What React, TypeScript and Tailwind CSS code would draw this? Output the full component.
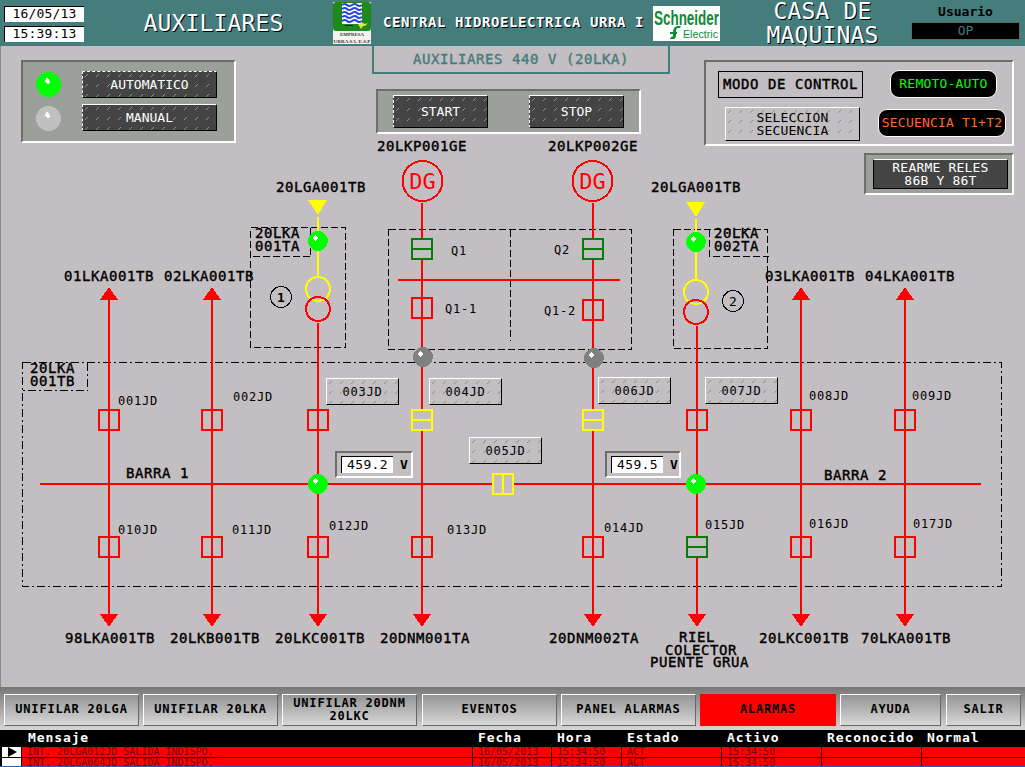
const mono = "[font-family:'DejaVu_Sans_Mono','Liberation_Mono',monospace]";

const RED = "#ff0000";
const YEL = "#ffff00";
const GRN = "#0a7a0a";
const LED = "#00ff00";

function Hatch({ tone }: { tone: "dark" | "light" }) {
  const id = `hatch-${tone}`;
  return (
    <svg className="absolute inset-0 w-full h-full" shapeRendering="crispEdges">
      <defs>
        <pattern id={id} patternUnits="userSpaceOnUse" width="11" height="10">
          <path d="M4 2h1v1h-1zM3 3h1v1h-1zM2 4h1v1h-1z" fill={tone === "dark" ? "#8e8e8e" : "#8c8c8c"} />
        </pattern>
      </defs>
      <rect width="100%" height="100%" fill={`url(#${id})`} />
    </svg>
  );
}

// className must carry the position (relative or absolute)
function HatchButton({ label, tone = "dark", className = "" }: { label: string; tone?: "dark" | "light"; className?: string }) {
  return (
    <div
      className={`flex items-center justify-center border border-t-white border-l-white border-r-black border-b-black text-center ${mono} ${
        tone === "dark" ? "bg-[#444444] text-white" : "bg-[#c3bec2] text-black"
      } ${className}`}
    >
      <Hatch tone={tone} />
      <span className="relative whitespace-pre-line">{label}</span>
    </div>
  );
}

function Panel({ className = "", children }: { className?: string; children?: React.ReactNode }) {
  return (
    <div className={`border-2 border-t-[#6b6e6b] border-l-[#6b6e6b] border-r-white border-b-white ${className}`}>
      {children}
    </div>
  );
}

function Lamp({ color }: { color: string }) {
  return (
    <svg width="25" height="25" viewBox="0 0 25 25" shapeRendering="crispEdges">
      <circle cx="12.5" cy="12.5" r="12.5" fill={color} />
      <path d="M10 6h2v1h1v2h1v2h-1v1h-2v-1h-1v-1h-1v-2h1v-1z" fill="#fff" />
    </svg>
  );
}

function UrraLogo() {
  return (
    <svg width="38" height="42" viewBox="0 0 38 42" className="mt-[2px] shrink-0">
      <rect width="38" height="42" fill="#f4f4ef" />
      <path d="M0 3q0-3 3-3h32q3 0 3 3v23q0 3-3 3h-32q-3 0-3-3z" fill="#1e8a1e" />
      <rect x="9" y="1" width="20" height="21" fill="#fff" />
      <g fill="none" stroke="#2546d8" strokeWidth="2">
        <path d="M9 3q3-2 5 0t5 0t5 0t5 0" />
        <path d="M9 7q3-2 5 0t5 0t5 0t5 0" />
        <path d="M9 11q3-2 5 0t5 0t5 0t5 0" />
        <path d="M9 15q3-2 5 0t5 0t5 0t5 0" />
        <path d="M9 19q3-2 5 0t5 0t5 0t5 0" />
      </g>
      <path d="M28 27l-3-5 2 0 1-2 4 2 3-1-3 3-2 0z" fill="#e2e24a" />
      <rect x="12" y="23" width="8" height="1" fill="#123" />
      <text x="19" y="34" textAnchor="middle" className="[font-family:'Liberation_Serif',serif]" fontSize="5" fontWeight="700" fill="#333" textLength="24" lengthAdjust="spacingAndGlyphs">EMPRESA</text>
      <text x="19" y="41" textAnchor="middle" className="[font-family:'Liberation_Serif',serif]" fontSize="5" fontWeight="700" fill="#333" textLength="37" lengthAdjust="spacingAndGlyphs">URRA SA. E.S.P</text>
    </svg>
  );
}

function SchneiderLogo() {
  return (
    <svg width="67" height="35" viewBox="0 0 67 35" className="shrink-0">
      <rect width="67" height="35" fill="#fff" />
      <text x="33.5" y="19" textAnchor="middle" className="[font-family:'Liberation_Sans',sans-serif]" fontSize="21" fontWeight="700" fill="#0c8a34" textLength="65" lengthAdjust="spacingAndGlyphs">Schneider</text>
      <path d="M20 27q0-7 5-7h3l-1 2h-2q-2 0-2 3v4q0 4-3 4h-3l1-2h1q1 0 1-2zM17 26h7v2h-7z" fill="#0c8a34" />
      <text x="30" y="32" className="[font-family:'Liberation_Sans',sans-serif]" fontSize="11" fill="#0c8a34" textLength="35" lengthAdjust="spacingAndGlyphs">Electric</text>
    </svg>
  );
}

function Breaker({ x, y, kind }: { x: number; y: number; kind: "red" | "yellow" | "green" | "yellowV" }) {
  const c = kind === "red" ? RED : kind === "green" ? GRN : YEL;
  return (
    <g fill="#c3bec2" stroke={c} strokeWidth="2" shapeRendering="crispEdges">
      <rect x={x - 10} y={y - 10} width="20" height="20" />
      {kind === "red" || kind === "yellowV" ? (
        <path d={`M${x} ${y - 10}v20`} />
      ) : (
        <path d={`M${x - 10} ${y}h20`} />
      )}
    </g>
  );
}

function Ball({ x, y, color }: { x: number; y: number; color: string }) {
  return (
    <g shapeRendering="crispEdges">
      <circle cx={x} cy={y} r="10" fill={color} />
      <path d={`M${x - 3} ${y - 6}l3 3l-3 3l-3-3z`} fill="#fff" />
    </g>
  );
}

function Label({ x, y, children, small }: { x: number; y: number; children: string; small?: boolean }) {
  return small ? (
    <text x={x} y={y + 4} fontSize="12" letterSpacing="0.8" fill="#000">{children}</text>
  ) : (
    <text x={x} y={y + 5} fontSize="14" letterSpacing="0.57" stroke="#000" strokeWidth="0.4" fill="#000">{children}</text>
  );
}

function Diagram() {
  return (
    <svg className={`absolute inset-0 ${mono}`} width="1025" height="641" viewBox="0 46 1025 641">
      {/* dashed frames */}
      <g fill="none" stroke="#000" strokeWidth="1" shapeRendering="crispEdges">
        <g strokeDasharray="8 3 2 3">
          <rect x="22.5" y="362.5" width="979" height="224" />
          <path d="M87.5 362.5v28h-65" />
        </g>
        <g strokeDasharray="7 3">
          <rect x="250.5" y="227.5" width="95" height="120" />
          <path d="M310.5 227.5v29h-60" />
          <rect x="388.5" y="229.5" width="243" height="120" />
          <path d="M510.5 229.5v111" />
          <rect x="673.5" y="229.5" width="94" height="119" />
          <path d="M709.5 229.5v27h59" />
        </g>
      </g>

      {/* red lines */}
      <g stroke={RED} strokeWidth="2" fill="none" shapeRendering="crispEdges">
        <path d="M40 484H981" />
        <path d="M398 280H620" />
        {[109, 212, 801, 905].map((x) => (
          <path key={x} d={`M${x} 298V616`} />
        ))}
        <path d="M318 323V616" />
        <path d="M422 203V616" />
        <path d="M593 203V616" />
        <path d="M697 326V616" />
      </g>

      {/* arrow heads */}
      <g fill={RED} shapeRendering="crispEdges">
        {[109, 212, 801, 905].map((x) => (
          <path key={x} d={`M${x} 287l9 13h-18z`} />
        ))}
        {[109, 212, 318, 422, 593, 697, 801, 905].map((x) => (
          <path key={x} d={`M${x} 627l9-13h-18z`} />
        ))}
      </g>

      {/* DG */}
      <g fill="none" stroke={RED} strokeWidth="2" shapeRendering="crispEdges">
        <circle cx="422.5" cy="181" r="20" />
        <circle cx="592.5" cy="181" r="20" />
      </g>
      <text x="422.5" y="189" textAnchor="middle" fontSize="22" fill={RED}>DG</text>
      <text x="592.5" y="189" textAnchor="middle" fontSize="22" fill={RED}>DG</text>

      {/* transformers */}
      <g shapeRendering="crispEdges">
        <path d="M308 200h19l-9 15z" fill={YEL} />
        <path d="M686 202h19l-9 15z" fill={YEL} />
        <path d="M318 217V277M696 219V280" stroke={YEL} strokeWidth="2" fill="none" />
        <circle cx="318" cy="289" r="12" fill="none" stroke={YEL} strokeWidth="2" />
        <circle cx="318" cy="309" r="12" fill="none" stroke={RED} strokeWidth="2" />
        <circle cx="696" cy="292" r="12" fill="none" stroke={YEL} strokeWidth="2" />
        <circle cx="696" cy="312" r="12" fill="none" stroke={RED} strokeWidth="2" />
        <circle cx="281" cy="297" r="10.5" fill="none" stroke="#000" strokeWidth="1" />
        <circle cx="733" cy="301" r="10.5" fill="none" stroke="#000" strokeWidth="1" />
      </g>
      <text x="281" y="302" textAnchor="middle" fontSize="13" fontWeight="700">1</text>
      <text x="733" y="306" textAnchor="middle" fontSize="13">2</text>

      {/* breakers */}
      <Breaker x={422} y={249} kind="green" />
      <Breaker x={593} y={249} kind="green" />
      <Breaker x={422} y={308} kind="red" />
      <Breaker x={593} y={310} kind="red" />
      {[109, 212, 318, 697, 801, 905].map((x) => (
        <Breaker key={x} x={x} y={420} kind="red" />
      ))}
      <Breaker x={422} y={420} kind="yellow" />
      <Breaker x={593} y={420} kind="yellow" />
      <Breaker x={503} y={484} kind="yellowV" />
      {[109, 212, 318, 422, 593, 801, 905].map((x) => (
        <Breaker key={x} x={x} y={547} kind="red" />
      ))}
      <Breaker x={697} y={547} kind="green" />

      {/* balls */}
      <Ball x={318} y={241} color={LED} />
      <Ball x={696} y={242} color={LED} />
      <Ball x={318} y={484} color={LED} />
      <Ball x={696} y={484} color={LED} />
      <Ball x={423} y={357} color="#808080" />
      <Ball x={594} y={358} color="#808080" />

      {/* labels */}
      <Label x={377} y={146}>20LKP001GE</Label>
      <Label x={548} y={146}>20LKP002GE</Label>
      <Label x={276} y={187}>20LGA001TB</Label>
      <Label x={651} y={187}>20LGA001TB</Label>
      <Label x={64} y={276}>01LKA001TB</Label>
      <Label x={164} y={276}>02LKA001TB</Label>
      <Label x={765} y={276}>03LKA001TB</Label>
      <Label x={865} y={276}>04LKA001TB</Label>
      <Label x={255} y={233}>20LKA</Label>
      <Label x={255} y={246}>001TA</Label>
      <Label x={714} y={233}>20LKA</Label>
      <Label x={714} y={246}>002TA</Label>
      <Label x={30} y={368}>20LKA</Label>
      <Label x={30} y={381}>001TB</Label>
      <Label x={65} y={638}>98LKA001TB</Label>
      <Label x={170} y={638}>20LKB001TB</Label>
      <Label x={275} y={638}>20LKC001TB</Label>
      <Label x={380} y={638}>20DNM001TA</Label>
      <Label x={549} y={638}>20DNM002TA</Label>
      <Label x={679} y={637}>RIEL</Label>
      <Label x={665} y={650}>COLECTOR</Label>
      <Label x={650} y={662}>PUENTE GRUA</Label>
      <Label x={759} y={638}>20LKC001TB</Label>
      <Label x={861} y={638}>70LKA001TB</Label>
      <Label x={126} y={473}>BARRA 1</Label>
      <Label x={824} y={475}>BARRA 2</Label>

      <Label small x={451} y={251}>Q1</Label>
      <Label small x={554} y={250}>Q2</Label>
      <Label small x={445} y={309}>Q1-1</Label>
      <Label small x={544} y={311}>Q1-2</Label>
      <Label small x={118} y={401}>001JD</Label>
      <Label small x={233} y={397}>002JD</Label>
      <Label small x={809} y={396}>008JD</Label>
      <Label small x={912} y={396}>009JD</Label>
      <Label small x={118} y={530}>010JD</Label>
      <Label small x={232} y={530}>011JD</Label>
      <Label small x={329} y={526}>012JD</Label>
      <Label small x={447} y={530}>013JD</Label>
      <Label small x={604} y={528}>014JD</Label>
      <Label small x={705} y={525}>015JD</Label>
      <Label small x={809} y={524}>016JD</Label>
      <Label small x={913} y={524}>017JD</Label>
    </svg>
  );
}

function VoltBox({ value, className }: { value: string; className: string }) {
  return (
    <Panel className={`absolute h-[27px] flex items-center pl-[4px] ${mono} ${className}`}>
      <div className="w-[52px] h-[17px] bg-white border-t border-l border-black flex items-center justify-center text-[13px] tracking-[0.4px] text-black">
        {value}
      </div>
      <span className="ml-[7px] text-[13px] font-bold text-black">V</span>
    </Panel>
  );
}

const jdButtons = [
  { label: "003JD", cls: "left-[326px] top-[332px]" },
  { label: "004JD", cls: "left-[429px] top-[332px]" },
  { label: "006JD", cls: "left-[598px] top-[331px]" },
  { label: "007JD", cls: "left-[705px] top-[331px]" },
  { label: "005JD", cls: "left-[469px] top-[391px]" },
];

const navItems = [
  { label: "UNIFILAR 20LGA", cls: "w-[135px]" },
  { label: "UNIFILAR 20LKA", cls: "w-[135px]" },
  { label: "UNIFILAR 20DNM\n20LKC", cls: "w-[135px]" },
  { label: "EVENTOS", cls: "w-[135px] ml-px" },
  { label: "PANEL ALARMAS", cls: "w-[135px]" },
  { label: "ALARMAS", cls: "w-[136px]", red: true },
  { label: "AYUDA", cls: "w-[101px]" },
  { label: "SALIR", cls: "w-[75px] ml-px" },
];

const rows = ["INT. 20LGA012JD SALIDA INDISPO.", "INT. 20LGA004JD SALIDA INDISPO."];
const tableCols = "grid grid-cols-[22px_450px_79px_70px_100px_100px_100px_104px]";

export default function App() {
  return (
    <div className={`w-[1025px] h-[767px] flex flex-col overflow-hidden bg-[#c3bec2] ${mono}`}>
      {/* header */}
      <header className="h-[46px] shrink-0 flex bg-[#457c7c] text-white">
        <div className="w-[84px] shrink-0 pl-[4px] pt-[6px] flex flex-col gap-[4px]">
          <div className="h-[16px] bg-white border-t border-l border-black text-black text-[13px] leading-[14px] tracking-[0.2px] text-center">16/05/13</div>
          <div className="h-[16px] bg-white border-t border-l border-black text-black text-[13px] leading-[14px] tracking-[0.2px] text-center">15:39:13</div>
        </div>
        <div className="ml-[10px] w-[239px] shrink-0 text-center text-[23px] leading-[46px] tracking-[0.15px] [text-shadow:1px_1px_0_#000]">AUXILIARES</div>
        <UrraLogo />
        <div className="w-[282px] shrink-0 pl-[12px] text-[14px] font-bold leading-[44px] tracking-[0.57px] whitespace-nowrap [text-shadow:1px_1px_0_#000]">CENTRAL HIDROELECTRICA URRA I</div>
        <div className="pt-[6px] shrink-0"><SchneiderLogo /></div>
        <div className="ml-[46px] w-[113px] shrink-0 text-center text-[23px] leading-[24px] tracking-[0.15px] [text-shadow:1px_1px_0_#000] -mt-[1px]">CASA DE MAQUINAS</div>
        <div className="flex-1 pt-[5px] pr-[5px] flex flex-col items-end">
          <div className="w-[109px] text-center text-[13px] font-bold text-black leading-[14px]">Usuario</div>
          <div className="w-[109px] h-[18px] mt-[3px] bg-black border border-[#666] text-[#457c7c] text-[13px] leading-[15px] text-center">OP</div>
        </div>
      </header>

      {/* mimic area */}
      <main className="relative flex-1">
        <Diagram />
        <div className="absolute left-0 inset-y-0 w-px bg-[#8a8a8a]" />

        {jdButtons.map((b) => (
          <HatchButton key={b.label} label={b.label} tone="light" className={`absolute w-[73px] h-[27px] text-[12px] tracking-[0.8px] ${b.cls}`} />
        ))}
        <VoltBox value="459.2" className="left-[335px] top-[405px] w-[78px]" />
        <VoltBox value="459.5" className="left-[605px] top-[405px] w-[76px]" />

        <div className="relative flex items-start text-[13px]">
          {/* mode selector */}
          <Panel className="ml-[21px] mt-[14px] w-[215px] h-[83px] bg-[#9ba09b] flex flex-col gap-[6px] pt-[9px] pl-[59px]">
            <div className="absolute left-[36px] top-[26px]"><Lamp color={LED} /></div>
            <div className="absolute left-[36px] top-[60px]"><Lamp color="#c0c0c0" /></div>
            <HatchButton label="AUTOMATICO" className="relative w-[135px] h-[27px] [border-style:dashed_solid_solid_dashed]" />
            <HatchButton label="MANUAL" className="relative w-[135px] h-[27px] [border-style:solid_solid_solid_dashed]" />
          </Panel>

          {/* subtitle + start/stop */}
          <div className="ml-[136px] w-[298px] flex flex-col">
            <div className="h-[28px] border-l-2 border-r-2 border-b-2 border-[#457c7c] text-[#457c7c] text-center text-[14px] leading-[26px] tracking-[0.57px] [-webkit-text-stroke:0.4px_#457c7c]">
              AUXILIARES 440 V (20LKA)
            </div>
            <Panel className="ml-[4px] mt-[15px] w-[265px] h-[45px] bg-[#9ba09b] flex items-center gap-[41px] pl-[15px]">
              <HatchButton label="START" className="relative w-[95px] h-[33px] [border-style:solid_solid_solid_dashed]" />
              <HatchButton label="STOP" className="relative w-[95px] h-[33px] [border-style:solid_solid_solid_dashed]" />
            </Panel>
          </div>

          {/* control mode + reset */}
          <div className="ml-[34px] w-[310px] mt-[14px] flex flex-col items-end">
            <Panel className="w-[310px] h-[86px] relative">
              <div className="absolute left-[12px] top-[9px] w-[145px] h-[27px] border border-black flex items-center justify-center text-[14px] tracking-[0.57px] text-black whitespace-nowrap [-webkit-text-stroke:0.4px_#000]">MODO DE CONTROL</div>
              <div className="absolute left-[184px] top-[8px] w-[107px] h-[28px] rounded-[9px] bg-black border border-white flex items-center justify-center text-[#00ff00] tracking-[0.2px]">REMOTO-AUTO</div>
              <HatchButton label={"SELECCION\nSECUENCIA"} tone="light" className="absolute left-[19px] top-[45px] w-[135px] h-[34px] text-[13px] leading-[13px] tracking-[0.2px]" />
              <div className="absolute left-[172px] top-[47px] w-[128px] h-[28px] rounded-[9px] bg-black border border-white flex items-center justify-center text-[#ff6a2a] tracking-[0.2px] whitespace-nowrap">SECUENCIA T1+T2</div>
            </Panel>
            <Panel className="mt-[7px] w-[150px] h-[42px] bg-[#9ba09b] pl-[7px] pt-[4px]">
              <div className="w-[135px] h-[30px] bg-[#444444] border border-t-white border-l-black border-r-black border-b-black text-white text-center leading-[13px] tracking-[0.2px] flex items-center justify-center">
                <span>REARME RELES<br />86B Y 86T</span>
              </div>
            </Panel>
          </div>
        </div>
      </main>

      {/* navigation */}
      <nav className="h-[43px] shrink-0 flex gap-1 pl-[4px] pt-[7px] bg-gradient-to-b from-[#777777] to-[#d6d6d6]">
        {navItems.map((n) => (
          <div
            key={n.label}
            className={`h-[32px] pb-px flex items-center justify-center text-center text-[12px] font-bold leading-[13px] tracking-[0.8px] text-black whitespace-pre-line ${n.cls} ${
              n.red
                ? "bg-[#ff0000]"
                : "bg-gradient-to-b from-[#949494] to-[#d8d8d8] border border-t-white border-l-white border-r-[#666] border-b-[#666]"
            }`}
          >
            {n.label}
          </div>
        ))}
      </nav>

      {/* alarm table */}
      <section className="h-[37px] shrink-0 bg-black overflow-hidden relative">
        <div className={`${tableCols} h-[17px] text-white text-[13px] font-bold leading-[16px] tracking-[0.9px]`}>
          <span />
          {["Mensaje", "Fecha", "Hora", "Estado", "Activo", "Reconocido", "Normal"].map((h) => (
            <span key={h} className="pl-[6px] whitespace-nowrap">{h}</span>
          ))}
        </div>
        {rows.map((msg, i) => (
          <div key={msg} className={`${tableCols} h-[10px] mb-px text-[10px] leading-[10px] text-[#7a0000]`}>
            <div className="ml-[2px] bg-white flex items-center pl-[6px] mr-px">
              {i === 0 && <svg width="10" height="10" viewBox="0 0 10 10"><path d="M0 0l9 5-9 5z" fill="#000" /></svg>}
            </div>
            <span className="bg-[#ff0000] pl-[5px] whitespace-nowrap">{msg}</span>
            <span className="bg-[#ff0000] border-l border-black pl-[5px]">16/05/2013</span>
            <span className="bg-[#ff0000] border-l border-black pl-[5px]">15:34:50</span>
            <span className="bg-[#ff0000] border-l border-black pl-[5px]">ACT</span>
            <span className="bg-[#ff0000] border-l border-black pl-[5px]">15:34:50</span>
            <span className="bg-[#ff0000] border-l border-black" />
            <span className="bg-[#ff0000] border-l border-black" />
          </div>
        ))}
        <div className="absolute left-0 right-0 bottom-0 h-px bg-[#2a5fb0]" />
      </section>
    </div>
  );
}
